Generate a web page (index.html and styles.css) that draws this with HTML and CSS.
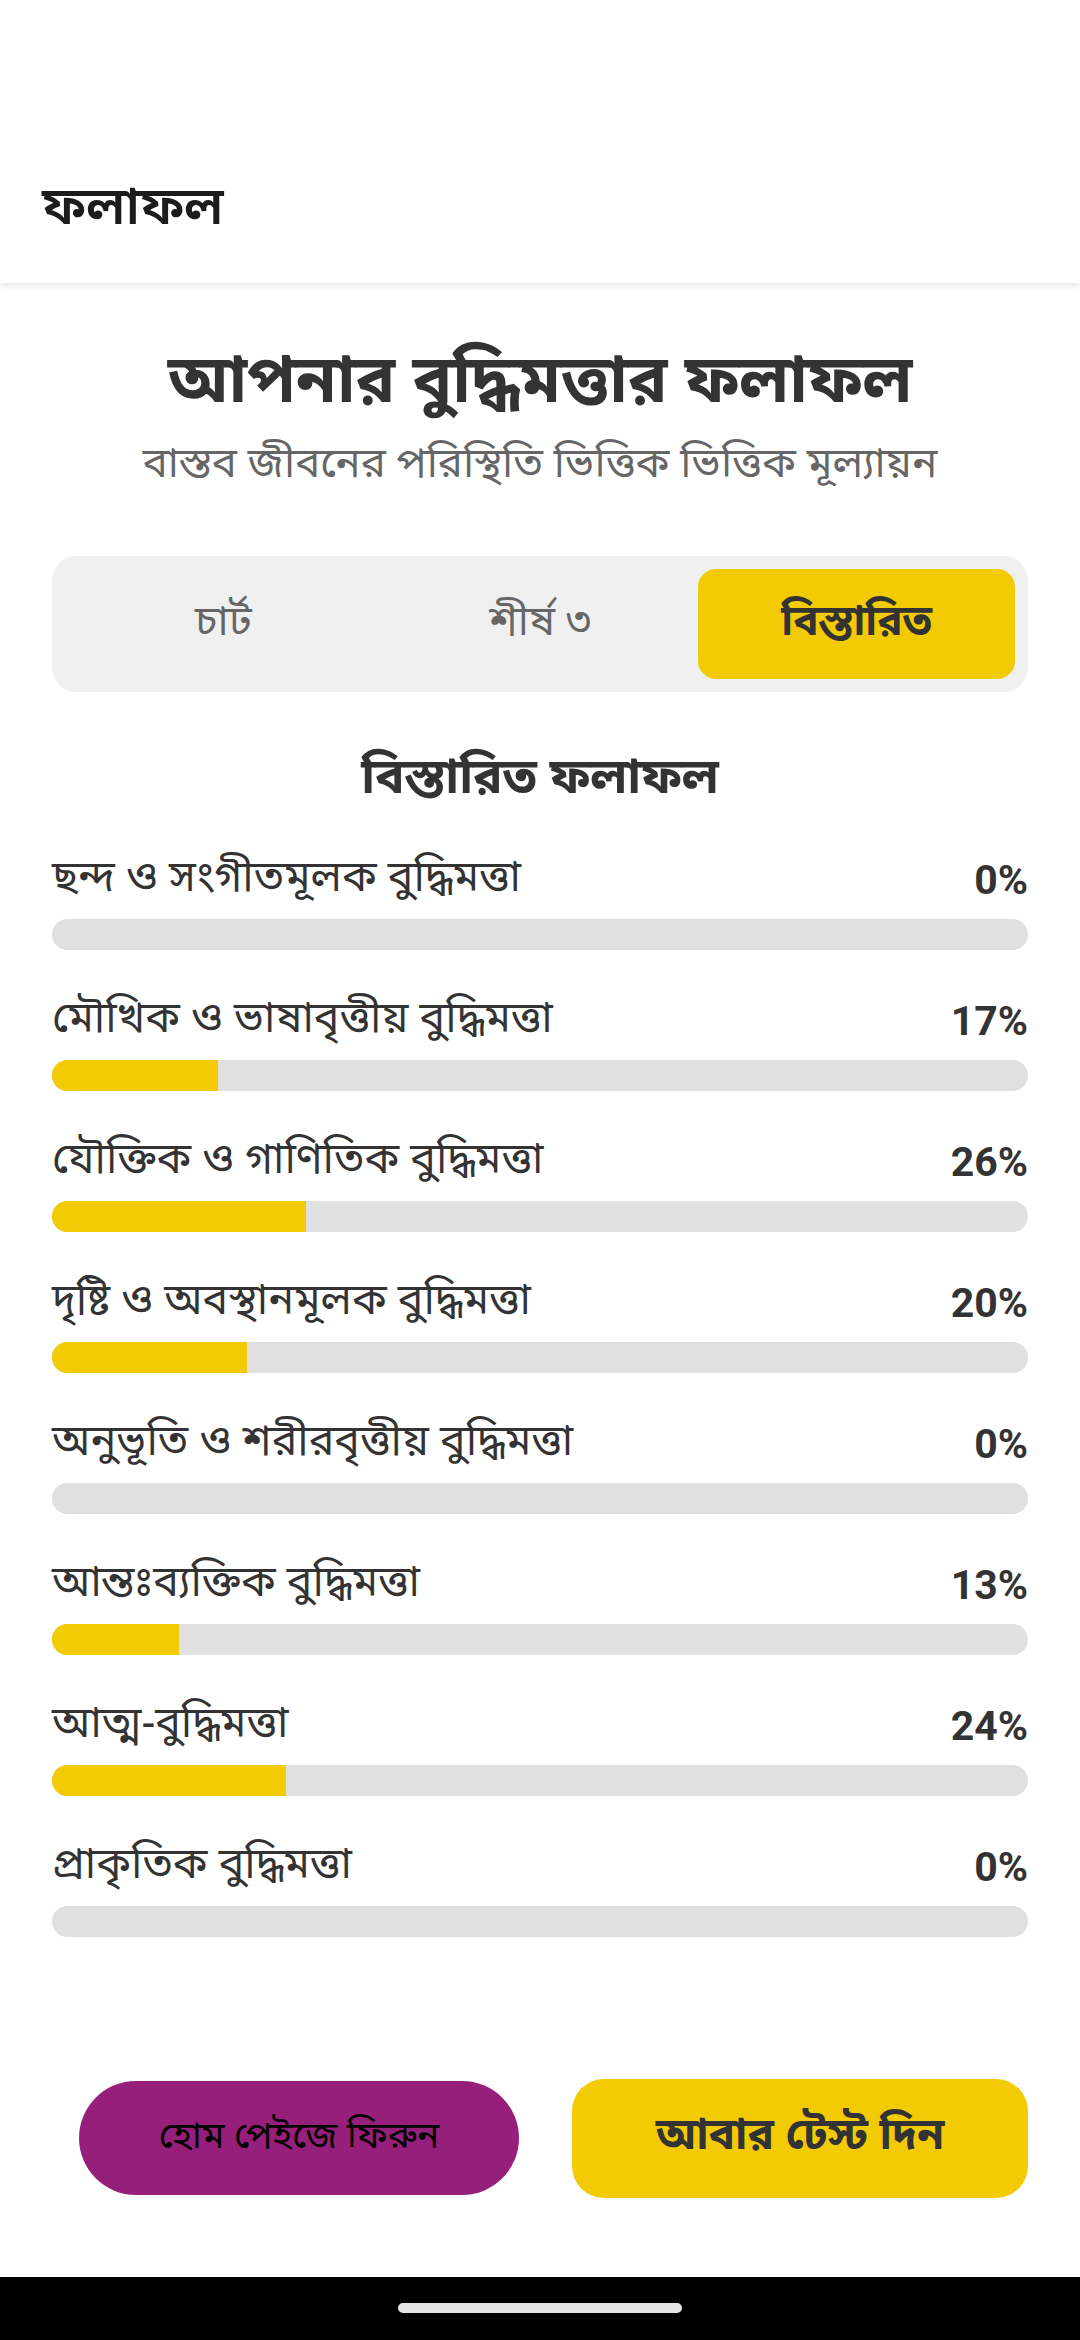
FILE: index.html
```html
<!DOCTYPE html>
<html lang="bn">
<head>
<meta charset="utf-8">
<title>ফলাফল</title>
<link rel="stylesheet" href="styles.css">
</head>
<body>
<div class="screen">
  <div class="statusbar"></div>
  <header class="appbar"><h1 class="appbar-title">ফলাফল</h1></header>
  <main class="content">
    <h2 class="title">আপনার বুদ্ধিমত্তার ফলাফল</h2>
    <p class="subtitle">বাস্তব জীবনের পরিস্থিতি ভিত্তিক ভিত্তিক মূল্যায়ন</p>
    <div class="tabs">
      <div class="tab">চার্ট</div>
      <div class="tab">শীর্ষ ৩</div>
      <div class="tab tab-active">বিস্তারিত</div>
    </div>
    <h3 class="section-title">বিস্তারিত ফলাফল</h3>
    <ul class="results">
      <li class="result">
        <div class="result-head"><span class="result-label">ছন্দ ও সংগীতমূলক বুদ্ধিমত্তা</span><span class="result-value">0%</span></div>
        <div class="bar"><div class="bar-fill" style="width:0%"></div></div>
      </li>
      <li class="result">
        <div class="result-head"><span class="result-label">মৌখিক ও ভাষাবৃত্তীয় বুদ্ধিমত্তা</span><span class="result-value">17%</span></div>
        <div class="bar"><div class="bar-fill" style="width:17%"></div></div>
      </li>
      <li class="result">
        <div class="result-head"><span class="result-label">যৌক্তিক ও গাণিতিক বুদ্ধিমত্তা</span><span class="result-value">26%</span></div>
        <div class="bar"><div class="bar-fill" style="width:26%"></div></div>
      </li>
      <li class="result">
        <div class="result-head"><span class="result-label">দৃষ্টি ও অবস্থানমূলক বুদ্ধিমত্তা</span><span class="result-value">20%</span></div>
        <div class="bar"><div class="bar-fill" style="width:20%"></div></div>
      </li>
      <li class="result">
        <div class="result-head"><span class="result-label">অনুভূতি ও শরীরবৃত্তীয় বুদ্ধিমত্তা</span><span class="result-value">0%</span></div>
        <div class="bar"><div class="bar-fill" style="width:0%"></div></div>
      </li>
      <li class="result">
        <div class="result-head"><span class="result-label">আন্তঃব্যক্তিক বুদ্ধিমত্তা</span><span class="result-value">13%</span></div>
        <div class="bar"><div class="bar-fill" style="width:13%"></div></div>
      </li>
      <li class="result">
        <div class="result-head"><span class="result-label">আত্ম-বুদ্ধিমত্তা</span><span class="result-value">24%</span></div>
        <div class="bar"><div class="bar-fill" style="width:24%"></div></div>
      </li>
      <li class="result">
        <div class="result-head"><span class="result-label">প্রাকৃতিক বুদ্ধিমত্তা</span><span class="result-value">0%</span></div>
        <div class="bar"><div class="bar-fill" style="width:0%"></div></div>
      </li>
    </ul>
  </main>
  <div class="actions">
    <button class="btn btn-home">হোম পেইজে ফিরুন</button>
    <button class="btn btn-retest">আবার টেস্ট দিন</button>
  </div>
  <div class="navbar"><span class="nav-handle"></span></div>
</div>
</body>
</html>
```
FILE: styles.css
```css
* { box-sizing: border-box; }
html, body {
  margin: 0;
  padding: 0;
  background: #ffffff;
}
body {
  font-family: "Noto Sans Bengali", "Noto Sans", "DejaVu Sans", sans-serif;
  color: #333333;
}
.screen {
  width: 1080px;
  height: 2340px;
  display: flex;
  flex-direction: column;
  overflow: hidden;
}
.statusbar {
  height: 154px;
  flex: none;
}
.appbar {
  height: 129px;
  flex: none;
  display: flex;
  align-items: center;
  padding: 0 42px 16px;
  background: #ffffff;
  box-shadow: 0 4px 7px -1px rgba(0, 0, 0, 0.10);
  position: relative;
  z-index: 1;
}
.appbar-title {
  margin: 0;
  font-size: 53px;
  font-weight: 600;
  color: #1c1c1c;
  line-height: 1;
}
.content {
  padding: 0 52px;
  flex: 1;
}
.title {
  margin: 62px 0 0;
  text-align: center;
  font-size: 66px;
  font-weight: 700;
  line-height: 80px;
  color: #333333;
}
.subtitle {
  margin: 15px 0 0;
  text-align: center;
  font-size: 42px;
  font-weight: 400;
  line-height: 52px;
  color: #666666;
}
.tabs {
  margin-top: 64px;
  display: grid;
  grid-template-columns: repeat(3, 1fr);
  padding: 13px;
  background: #f0f0f0;
  border-radius: 24px;
}
.tab {
  height: 110px;
  display: flex;
  align-items: center;
  justify-content: center;
  font-size: 42px;
  color: #666666;
  border-radius: 18px;
}
.tab-active {
  background: #f2cb05;
  color: #333333;
  font-weight: 700;
}
.section-title {
  margin: 59px 0 0;
  text-align: center;
  font-size: 49px;
  font-weight: 700;
  line-height: 60px;
  color: #333333;
}
.results {
  list-style: none;
  margin: 30px 0 0;
  padding: 0;
  display: flex;
  flex-direction: column;
  gap: 32px;
}
.result-head {
  display: flex;
  justify-content: space-between;
  align-items: center;
  height: 78px;
}
.result-label {
  font-size: 43px;
  color: #333333;
}
.result-value {
  font-family: Roboto, "Liberation Sans", sans-serif;
  font-size: 41px;
  font-weight: 700;
  color: #333333;
}
.bar {
  height: 31px;
  border-radius: 16px;
  background: #e0e0e0;
  overflow: hidden;
}
.bar-fill {
  height: 100%;
  background: #f2cb05;
}
.actions {
  flex: none;
  display: flex;
  align-items: center;
  padding: 0 52px 0 79px;
  gap: 53px;
  height: 160px;
  margin-bottom: 59px;
}
.btn {
  border: none;
  font-family: inherit;
  display: flex;
  align-items: center;
  justify-content: center;
  padding: 0;
}
.btn-home {
  width: 440px;
  height: 114px;
  border-radius: 57px;
  background: #951f7a;
  color: #000000;
  font-size: 37px;
  font-weight: 400;
}
.btn-retest {
  width: 456px;
  height: 119px;
  border-radius: 32px;
  background: #f2cb05;
  color: #333333;
  font-size: 44px;
  font-weight: 700;
}
.navbar {
  flex: none;
  height: 63px;
  background: #000000;
  display: flex;
  justify-content: center;
  padding-top: 26px;
}
.nav-handle {
  width: 284px;
  height: 10px;
  border-radius: 5px;
  background: #e6e6e6;
}
```
